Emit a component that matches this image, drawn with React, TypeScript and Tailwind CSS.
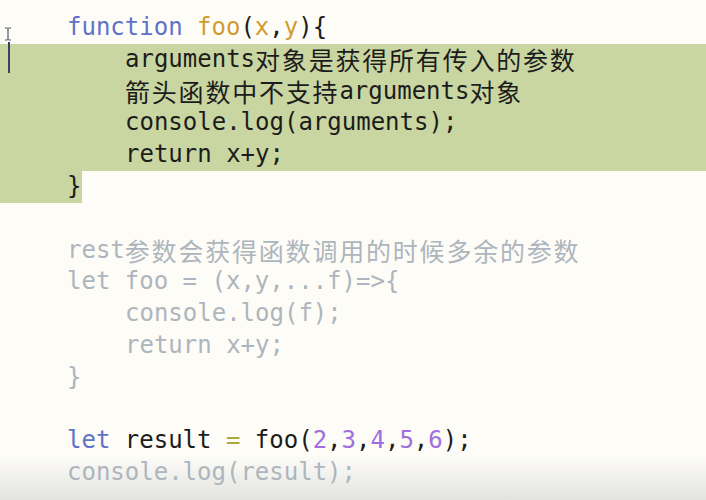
import React from "react";

type Tok = { t: string; c?: string; cjk?: boolean };

const DARK = "text-[#1c1c1c]";
const GREY = "text-[#adb5bd]";
const BLUE = "text-[#5f72c9]";
const ORANGE = "text-[#d39b2f]";
const PURPLE = "text-[#a06fe0]";
const OLIVE = "text-[#a9a93c]";

const LINES: { indent: number; toks: Tok[]; hl?: "full" | "brace" }[] = [
  {
    indent: 0,
    toks: [
      { t: "function ", c: BLUE },
      { t: "foo", c: ORANGE },
      { t: "(", c: DARK },
      { t: "x", c: ORANGE },
      { t: ",", c: DARK },
      { t: "y", c: ORANGE },
      { t: "){", c: DARK },
    ],
  },
  {
    indent: 1,
    hl: "full",
    toks: [
      { t: "arguments", c: DARK },
      { t: "对象是获得所有传入的参数", c: DARK, cjk: true },
    ],
  },
  {
    indent: 1,
    hl: "full",
    toks: [
      { t: "箭头函数中不支持", c: DARK, cjk: true },
      { t: "arguments", c: DARK },
      { t: "对象", c: DARK, cjk: true },
    ],
  },
  { indent: 1, hl: "full", toks: [{ t: "console.log(arguments);", c: DARK }] },
  { indent: 1, hl: "full", toks: [{ t: "return x+y;", c: DARK }] },
  { indent: 0, hl: "brace", toks: [{ t: "}", c: DARK }] },
  { indent: 0, toks: [] },
  {
    indent: 0,
    toks: [
      { t: "rest", c: GREY },
      { t: "参数会获得函数调用的时候多余的参数", c: GREY, cjk: true },
    ],
  },
  { indent: 0, toks: [{ t: "let foo = (x,y,...f)=>{", c: GREY }] },
  { indent: 1, toks: [{ t: "console.log(f);", c: GREY }] },
  { indent: 1, toks: [{ t: "return x+y;", c: GREY }] },
  { indent: 0, toks: [{ t: "}", c: GREY }] },
  { indent: 0, toks: [] },
  {
    indent: 0,
    toks: [
      { t: "let ", c: BLUE },
      { t: "result ", c: DARK },
      { t: "= ", c: OLIVE },
      { t: "foo(", c: DARK },
      { t: "2", c: PURPLE },
      { t: ",", c: DARK },
      { t: "3", c: PURPLE },
      { t: ",", c: DARK },
      { t: "4", c: PURPLE },
      { t: ",", c: DARK },
      { t: "5", c: PURPLE },
      { t: ",", c: DARK },
      { t: "6", c: PURPLE },
      { t: ");", c: DARK },
    ],
  },
  { indent: 0, toks: [{ t: "console.log(result);", c: GREY }] },
];

function Tokens({ toks }: { toks: Tok[] }) {
  return (
    <>
      {toks.map((k, i) =>
        k.cjk ? (
          <span
            key={i}
            className={`${k.c} text-[25px] tracking-[1.8px] leading-[31.8px] font-['Noto_Sans_CJK_SC',sans-serif]`}
          >
            {k.t}
          </span>
        ) : (
          <span key={i} className={k.c}>
            {k.t}
          </span>
        )
      )}
    </>
  );
}

export default function App() {
  return (
    <div className="relative w-[706px] h-[500px] overflow-hidden bg-[linear-gradient(to_bottom,#fdfcf7_455px,#e3e3e1_500px)] font-['DejaVu_Sans_Mono',monospace] text-[24px] leading-[31.8px]">
      <div className="flex flex-col pt-[12px]">
        {LINES.map((line, i) => {
          if (line.hl === "brace") {
            return (
              <div key={i} className="flex h-[31.8px]">
                <div className="flex bg-[#c9d6a1] pl-[67px] pr-[1px] whitespace-pre">
                  <Tokens toks={line.toks} />
                </div>
              </div>
            );
          }
          return (
            <div
              key={i}
              className={`flex items-center h-[31.8px] whitespace-pre ${
                line.hl === "full" ? "bg-[#c9d6a1]" : ""
              } ${line.indent ? "pl-[125px]" : "pl-[67px]"}`}
            >
              <Tokens toks={line.toks} />
            </div>
          );
        })}
      </div>

      {/* text cursor + caret */}
      <svg className="absolute left-[3px] top-[27px]" width="10" height="14" viewBox="0 0 10 14">
        <path d="M2 1h2.5M5.5 1H8M5 1v12M2 13h2.5M5.5 13H8" stroke="#55556a" strokeWidth="1.2" fill="none" />
      </svg>
      <div className="absolute left-[8px] top-[42px] w-[2px] h-[31px] bg-[#3d3f5e]" />
    </div>
  );
}
